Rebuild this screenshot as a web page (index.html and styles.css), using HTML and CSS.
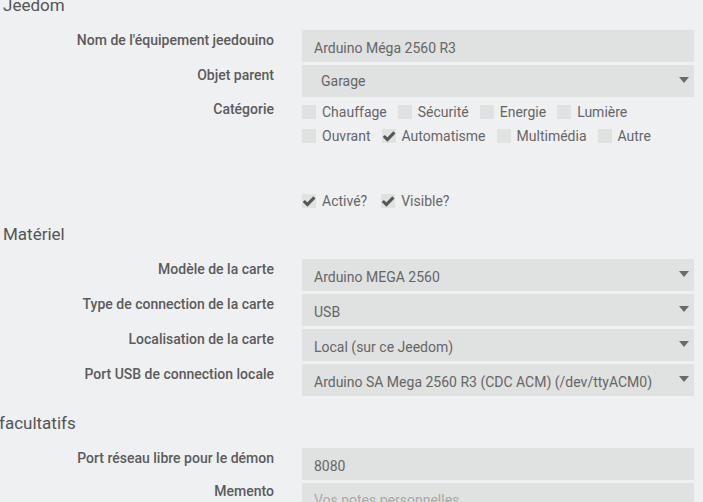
FILE: index.html
```html
<!DOCTYPE html>
<html lang="fr">
<head>
<meta charset="utf-8">
<title>Jeedouino</title>
<link rel="stylesheet" href="styles.css">
</head>
<body>
<div class="page">
  <section class="group">
    <div class="legend legend-first">Jeedom</div>
    <div class="row">
      <div class="label">Nom de l'équipement jeedouino</div>
      <div class="field"><div class="input">Arduino Méga 2560 R3</div></div>
    </div>
    <div class="row">
      <div class="label">Objet parent</div>
      <div class="field"><div class="input select select-indent">Garage<span class="caret"></span></div></div>
    </div>
    <div class="row row-cat">
      <div class="label">Catégorie</div>
      <div class="field">
        <div class="check-line">
          <span class="cb"><span class="box"></span>Chauffage</span>
          <span class="cb"><span class="box"></span>Sécurité</span>
          <span class="cb"><span class="box"></span>Energie</span>
          <span class="cb"><span class="box"></span>Lumière</span>
        </div>
        <div class="check-line">
          <span class="cb"><span class="box"></span>Ouvrant</span>
          <span class="cb"><span class="box"><svg viewBox="0 0 14 14" width="14" height="14"><path d="M1.8 7.0 L5.4 10.6 L12.4 3.4" /></svg></span>Automatisme</span>
          <span class="cb"><span class="box"></span>Multimédia</span>
          <span class="cb"><span class="box"></span>Autre</span>
        </div>
      </div>
    </div>
    <div class="row row-state">
      <div class="label"></div>
      <div class="field">
        <div class="check-line state-line">
          <span class="cb"><span class="box"><svg viewBox="0 0 14 14" width="14" height="14"><path d="M1.8 7.0 L5.4 10.6 L12.4 3.4" /></svg></span>Activé?</span>
          <span class="cb"><span class="box"><svg viewBox="0 0 14 14" width="14" height="14"><path d="M1.8 7.0 L5.4 10.6 L12.4 3.4" /></svg></span>Visible?</span>
        </div>
      </div>
    </div>
  </section>

  <section class="group group-hw">
    <div class="legend">Matériel</div>
    <div class="row">
      <div class="label">Modèle de la carte</div>
      <div class="field"><div class="input select">Arduino MEGA 2560<span class="caret"></span></div></div>
    </div>
    <div class="row">
      <div class="label">Type de connection de la carte</div>
      <div class="field"><div class="input select">USB<span class="caret"></span></div></div>
    </div>
    <div class="row">
      <div class="label">Localisation de la carte</div>
      <div class="field"><div class="input select">Local (sur ce Jeedom)<span class="caret"></span></div></div>
    </div>
    <div class="row">
      <div class="label">Port USB de connection locale</div>
      <div class="field"><div class="input select">Arduino SA Mega 2560 R3 (CDC ACM) (/dev/ttyACM0)<span class="caret"></span></div></div>
    </div>
  </section>

  <section class="group group-opt">
    <div class="legend legend-cut">facultatifs</div>
    <div class="row">
      <div class="label">Port réseau libre pour le démon</div>
      <div class="field"><div class="input">8080</div></div>
    </div>
    <div class="row">
      <div class="label label-up">Memento</div>
      <div class="field"><div class="textarea">Vos notes personnelles</div></div>
    </div>
  </section>
</div>
</body>
</html>
```

FILE: styles.css
```css
* {
  box-sizing: border-box;
}

html,
body {
  margin: 0;
  padding: 0;
  background: #eff0f2;
}

body {
  font-family: Roboto, "Liberation Sans", sans-serif;
  font-size: 14px;
  color: #666;
}

.page {
  width: 703px;
  height: 502px;
  overflow: hidden;
}

.legend {
  font-size: 17px;
  line-height: 20px;
  color: #555;
  padding-left: 3px;
  margin-bottom: 15px;
}

.legend-first {
  margin-top: -5px;
}

.legend-cut {
  padding-left: 0;
  margin-left: -1px;
}

.group-hw {
  margin-top: 11px;
}

.group-opt {
  margin-top: 17px;
}

.row {
  display: grid;
  grid-template-columns: 274px 392px;
  column-gap: 28px;
  margin-bottom: 3px;
}

.label {
  text-align: right;
  font-weight: 500;
  color: #5b5b5b;
  line-height: 16px;
  padding-top: 2px;
}

.row-cat .label {
  padding-top: 1px;
}

.label-up {
  margin-top: -2px;
}

.input {
  position: relative;
  height: 32px;
  background: #e0e1e1;
  padding: 4px 12px 0;
  line-height: 28px;
  color: #666;
  white-space: nowrap;
}

.select {
  padding-right: 28px;
}

.select-indent {
  padding-left: 19px;
  padding-top: 2px;
}

.caret {
  position: absolute;
  right: 5px;
  top: 12px;
  width: 0;
  height: 0;
  border-left: 5.5px solid transparent;
  border-right: 5.5px solid transparent;
  border-top: 6px solid #6a6a6a;
}

.textarea {
  height: 60px;
  background: #e0e1e1;
  padding: 7px 12px;
  line-height: 20px;
  color: #a9a9a9;
}

.row-cat {
  margin-bottom: 41px;
}

.row-state {
  margin-bottom: 0;
}

.check-line {
  display: flex;
  align-items: center;
  height: 24px;
  line-height: 24px;
}

.cb {
  display: inline-flex;
  align-items: center;
  margin-right: 11px;
  color: #666;
}

.state-line .cb {
  margin-right: 14px;
}

.box {
  display: inline-block;
  width: 14px;
  height: 14px;
  background: #e0e1e1;
  margin-right: 6px;
}

.box svg {
  display: block;
}

.box path {
  fill: none;
  stroke: #555;
  stroke-width: 3;
  stroke-linecap: butt;
  stroke-linejoin: miter;
}
```
